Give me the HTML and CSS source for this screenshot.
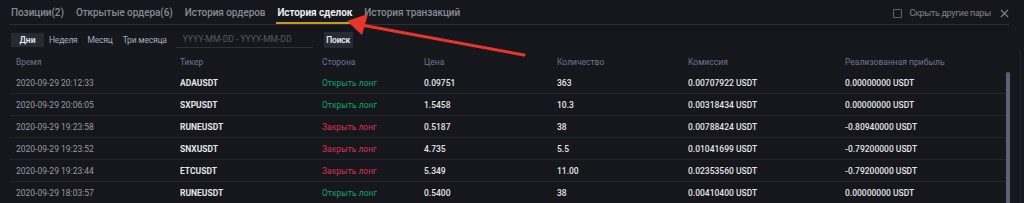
FILE: index.html
```html
<!DOCTYPE html>
<html lang="ru">
<head>
<meta charset="utf-8">
<link rel="stylesheet" href="styles.css">
</head>
<body>
<div class="page">
  <div class="tabbar">
    <div class="tabs">
      <span class="tab">Позиции(2)</span>
      <span class="tab">Открытые ордера(6)</span>
      <span class="tab">История ордеров</span>
      <span class="tab active">История сделок</span>
      <span class="tab">История транзакций</span>
    </div>
    <div class="tabtools">
      <span class="checkbox"></span>
      <span class="hide-label">Скрыть другие пары</span>
      <svg class="close" width="9" height="9" viewBox="0 0 9 9"><path d="M1 1L8 8M8 1L1 8" stroke="#7d828e" stroke-width="1.1" fill="none"/></svg>
    </div>
  </div>
  <div class="filters">
    <div class="periods">
      <span class="period on">Дни</span>
      <span class="period">Неделя</span>
      <span class="period">Месяц</span>
      <span class="period">Три месяца</span>
    </div>
    <span class="daterange">YYYY-MM-DD - YYYY-MM-DD</span>
    <span class="search">Поиск</span>
  </div>
  <div class="tablewrap">
    <div class="table">
      <div class="row head">
        <span>Время</span><span>Тикер</span><span>Сторона</span><span>Цена</span><span>Количество</span><span>Комиссия</span><span>Реализованная прибыль</span>
      </div>
      <div class="row">
        <span class="time">2020-09-29 20:12:33</span><span class="tick">ADAUSDT</span><span class="buy">Открыть лонг</span><span class="num">0.09751</span><span class="num">363</span><span class="num">0.00707922 USDT</span><span class="num">0.00000000 USDT</span>
      </div>
      <div class="row">
        <span class="time">2020-09-29 20:06:05</span><span class="tick">SXPUSDT</span><span class="buy">Открыть лонг</span><span class="num">1.5458</span><span class="num">10.3</span><span class="num">0.00318434 USDT</span><span class="num">0.00000000 USDT</span>
      </div>
      <div class="row">
        <span class="time">2020-09-29 19:23:58</span><span class="tick">RUNEUSDT</span><span class="sell">Закрыть лонг</span><span class="num">0.5187</span><span class="num">38</span><span class="num">0.00788424 USDT</span><span class="num">-0.80940000 USDT</span>
      </div>
      <div class="row">
        <span class="time">2020-09-29 19:23:52</span><span class="tick">SNXUSDT</span><span class="sell">Закрыть лонг</span><span class="num">4.735</span><span class="num">5.5</span><span class="num">0.01041699 USDT</span><span class="num">-0.79200000 USDT</span>
      </div>
      <div class="row">
        <span class="time">2020-09-29 19:23:44</span><span class="tick">ETCUSDT</span><span class="sell">Закрыть лонг</span><span class="num">5.349</span><span class="num">11.00</span><span class="num">0.02353560 USDT</span><span class="num">-0.79200000 USDT</span>
      </div>
      <div class="row">
        <span class="time">2020-09-29 18:03:57</span><span class="tick">RUNEUSDT</span><span class="buy">Открыть лонг</span><span class="num">0.5400</span><span class="num">38</span><span class="num">0.00410400 USDT</span><span class="num">0.00000000 USDT</span>
      </div>
    </div>
    <div class="scrolltrack"><div class="thumb"></div></div>
  </div>
</div>
<svg class="arrow" width="1024" height="203" viewBox="0 0 1024 203">
  <path d="M524 55L356 24" stroke="#e8352c" stroke-width="3" stroke-linecap="round" fill="none"/>
  <path d="M347 21L368 14L362 35Z" fill="#e8352c"/>
</svg>
</body>
</html>
```
FILE: styles.css
```css
html, body {
  margin: 0;
  padding: 0;
  background: #16171c;
  width: 1024px;
  height: 203px;
  overflow: hidden;
  font-family: Roboto, "Noto Sans", "Liberation Sans", sans-serif;
}
.page {
  padding-left: 10px;
}
.tabbar {
  display: flex;
  justify-content: space-between;
  align-items: stretch;
  width: 999px;
  height: 24px;
  border-bottom: 1px solid #2b2d34;
}
.tabs {
  display: flex;
  gap: 12px;
  padding-left: 1px;
}
.tab {
  font-size: 10px;
  letter-spacing: -0.08px;
  font-weight: 500;
  color: #848b98;
  line-height: 26px;
  height: 24px;
  box-sizing: border-box;
}
.tab.active {
  color: #eaecef;
  font-weight: 700;
  border-bottom: 2px solid #c99a1c;
  padding: 0 1px;
  margin: 0 -1px;
}
.tabtools {
  display: flex;
  align-items: center;
  padding-top: 2px;
}
.checkbox {
  width: 7px;
  height: 7px;
  border: 1px solid #5d626d;
  border-radius: 1px;
  margin-right: 7px;
}
.hide-label {
  font-size: 9px;
  letter-spacing: -0.3px;
  color: #7d828e;
  margin-right: 9px;
}
.close {
  display: block;
}
.filters {
  display: flex;
  align-items: center;
  height: 16px;
  margin-top: 7px;
  padding-left: 1px;
}
.periods {
  display: flex;
  align-items: center;
  gap: 10px;
}
.period {
  font-size: 8.5px;
  letter-spacing: -0.2px;
  color: #a3abc0;
  line-height: 14px;
}
.period.on {
  background: #262a33;
  color: #e6e8ec;
  font-weight: 600;
  letter-spacing: 0;
  width: 33px;
  text-align: center;
  margin-right: -5px;
}
.daterange {
  font-size: 8.5px;
  color: #545964;
  margin-left: 9px;
  padding: 0 0 0 7px;
  width: 130px;
  line-height: 15px;
  border-bottom: 1px solid #2e3038;
}
.search {
  font-size: 8.5px;
  letter-spacing: -0.2px;
  font-weight: 600;
  color: #e6e8ec;
  background: #262a33;
  margin-left: 11px;
  width: 29px;
  text-align: center;
  line-height: 16px;
}
.tablewrap {
  display: flex;
  margin-top: 3px;
}
.table {
  width: 996px;
}
.row {
  display: grid;
  grid-template-columns: 164px 142px 102px 133px 131px 157px 1fr;
  height: 21px;
  align-items: center;
  padding-left: 6px;
  border-bottom: 1px solid #24262d;
  font-size: 8.5px;
}
.row.head {
  border-bottom: none;
  height: 21px;
  font-size: 8.5px;
  color: #6c7691;
}
.time {
  color: #959aa5;
}
.tick {
  color: #e3e5e9;
  font-weight: 700;
}
.buy {
  color: #0fa46c;
}
.sell {
  color: #d9304e;
}
.num {
  color: #e3e5e9;
  font-weight: 500;
}
.scrolltrack {
  width: 14px;
  padding-top: 21px;
  border-right: 1px solid #24262d;
}
.thumb {
  width: 4px;
  height: 140px;
  background: #5d6270;
  border-radius: 2px;
}
.arrow {
  position: absolute;
  left: 0;
  top: 0;
  pointer-events: none;
}
```
